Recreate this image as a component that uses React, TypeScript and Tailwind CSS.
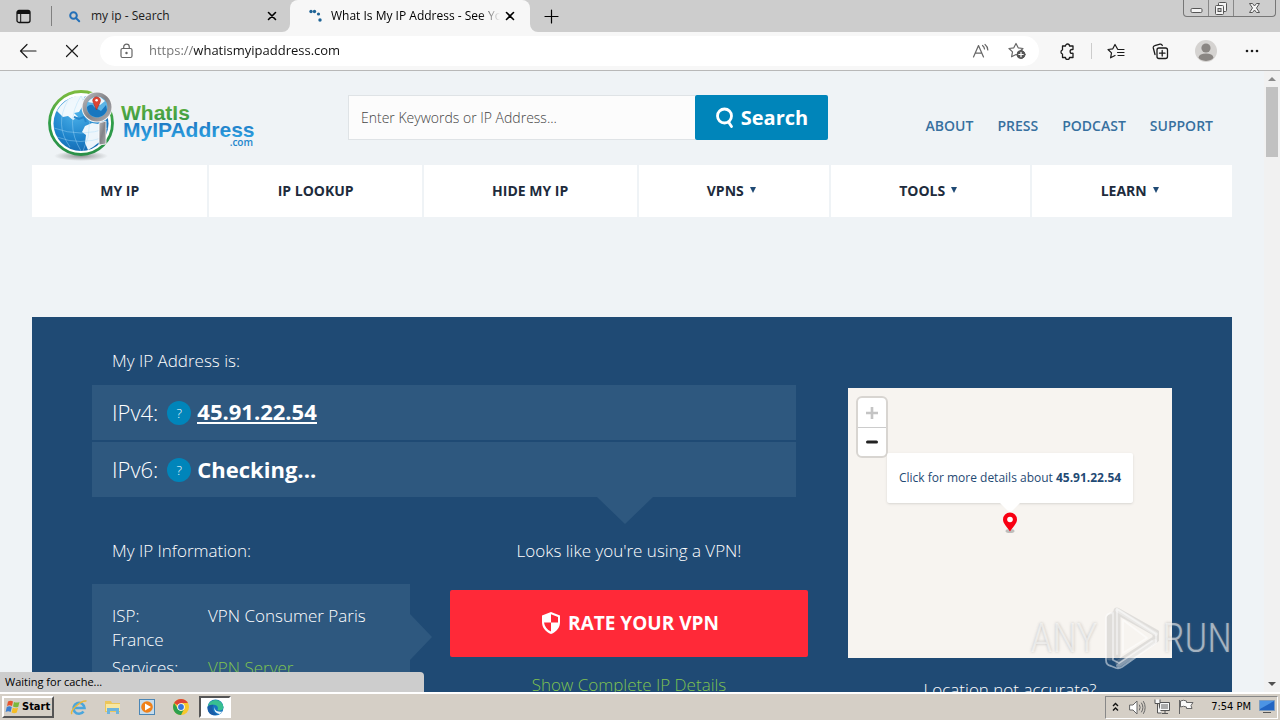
import type { ReactNode } from 'react';

const stroke = { fill: 'none', stroke: 'currentColor', strokeLinecap: 'round' as const, strokeLinejoin: 'round' as const };

function CloseIcon() {
  return (
    <svg className="size-3" viewBox="0 0 12 12" {...stroke} strokeWidth="1.6">
      <path d="M2.5 2.5l7 7M9.5 2.5l-7 7" />
    </svg>
  );
}

function WindowButtons() {
  return (
    <div className="flex h-[17px] self-start overflow-hidden rounded-b-[4px] border border-t-0 border-[#777] text-[#555] mr-1">
      <button aria-label="Minimize" className="flex w-[25px] items-center justify-center border-r border-[#888]">
        <svg width="13" height="16" viewBox="0 0 13 16"><rect x="1" y="8.5" width="11" height="4" rx="1.2" fill="#f4f4f4" stroke="#555" /></svg>
      </button>
      <button aria-label="Restore" className="flex w-[25px] items-center justify-center border-r border-[#888]">
        <svg width="14" height="16" viewBox="0 0 14 16" fill="#f4f4f4" stroke="#555">
          <rect x="4.5" y="2.5" width="8" height="9" rx="1" />
          <rect x="1.500" y="5.5" width="8" height="9" rx="1" />
          <rect x="4" y="8.500" width="3" height="3" fill="#ccc" />
        </svg>
      </button>
      <button aria-label="Close" className="flex w-[41px] items-center justify-center">
        <svg width="13" height="14" viewBox="0 0 13 14"><path d="M1.500 2.500h3l2 2.500 2-2.500h3L8.500 7l3 4.500h-3l-2-2.500-2 2.500h-3l3-4.500z" fill="#f4f4f4" stroke="#555" /></svg>
      </button>
    </div>
  );
}

function TabStrip() {
  return (
    <div className="flex h-8 shrink-0 items-end bg-[#cdcdcd] text-[12px]">
      <button aria-label="Tab actions" className="flex h-8 w-[51px] shrink-0 items-center justify-center pr-1">
        <svg width="15" height="15" viewBox="0 0 15 15">
          <rect x="1" y="1.500" width="13" height="12" rx="2" fill="none" stroke="#111" strokeWidth="1.300" />
          <path d="M1 5V3.500A2 2 0 0 1 3 1.500h9a2 2 0 0 1 2 2V5z" fill="#111" />
          <path d="M4.700 5v8" stroke="#111" />
        </svg>
      </button>
      <div className="mb-[6px] h-5 w-px bg-[#808080]" />
      <div className="flex h-8 w-[238px] items-center pl-4 pr-3">
        <svg className="mr-[10px]" width="13" height="13" viewBox="0 0 13 13" {...stroke} stroke="#2470b8" strokeWidth="2">
          <circle cx="5.500" cy="5.500" r="3.300" /><path d="M8.200 8.200l3 3" />
        </svg>
        <span className="flex-1 text-[#1b1b1b]">my ip - Search</span>
        <button aria-label="Close my ip - Search"><CloseIcon /></button>
      </div>
      <div className="relative flex h-8 w-[240px] items-center rounded-t-lg bg-[#f7f7f7] pl-[17px] pr-[14px]">
        <svg className="absolute -left-2 bottom-0" width="8" height="8" viewBox="0 0 8 8"><path d="M8 0v8H0a8 8 0 0 0 8-8z" fill="#f7f7f7" /></svg>
        <svg className="absolute -right-2 bottom-0" width="8" height="8" viewBox="0 0 8 8"><path d="M0 0v8h8a8 8 0 0 1-8-8z" fill="#f7f7f7" /></svg>
        <svg className="mr-[9px] shrink-0" width="15" height="15" viewBox="0 0 15 15" fill="#1f6496">
          <circle cx="4" cy="2.500" r="1.700" /><circle cx="7.500" cy="2.500" r="1.700" /><circle cx="11.500" cy="5" r="1.600" /><circle cx="13" cy="11" r="1.700" />
        </svg>
        <span className="flex-1 overflow-hidden whitespace-nowrap text-black [mask-image:linear-gradient(90deg,#000_88%,transparent)]">What Is My IP Address - See You</span>
        <button aria-label="Close What Is My IP Address" className="ml-1"><CloseIcon /></button>
      </div>
      <button aria-label="New tab" className="flex size-8 items-center justify-center ml-[5px]">
        <svg width="15" height="15" viewBox="0 0 15 15" {...stroke} strokeWidth="1.200"><path d="M7.500 1v13M1 7.500h13" /></svg>
      </button>
      <div className="flex-1" />
      <WindowButtons />
    </div>
  );
}

function ToolButton({ label, children }: { label: string; children: ReactNode }) {
  return <button aria-label={label} className="flex size-6 shrink-0 items-center justify-center text-[#1b1b1b]">{children}</button>;
}

function Toolbar() {
  return (
    <div className="flex h-[39px] shrink-0 items-center border-b border-[#b8b8b8] bg-[#f7f7f7] pl-4 pr-4">
      <ToolButton label="Back">
        <svg width="18" height="16" viewBox="0 0 18 16" {...stroke} strokeWidth="1.200"><path d="M8 1.500L1.500 8 8 14.500M1.500 8H17" /></svg>
      </ToolButton>
      <div className="w-5" />
      <ToolButton label="Stop">
        <svg width="14" height="14" viewBox="0 0 14 14" {...stroke} strokeWidth="1.200"><path d="M1.500 1.500l11 11M12.500 1.500l-11 11" /></svg>
      </ToolButton>
      <div className="ml-4 flex h-[30px] flex-1 items-center rounded-full bg-white pl-5 pr-[10px]">
        <svg width="13" height="16" viewBox="0 0 13 16" {...stroke} stroke="#666" strokeWidth="1.200">
          <rect x="1" y="5.500" width="11" height="9" rx="1.500" /><path d="M3.700 5.500V4a2.800 2.800 0 0 1 5.600 0v1.500" /><circle cx="6.500" cy="10" r=".6" fill="#666" />
        </svg>
        <input
          aria-label="Address"
          defaultValue="https://whatismyipaddress.com"
          className="ml-4 min-w-0 flex-1 bg-[linear-gradient(90deg,#707070_45px,#111_45px)] bg-clip-text text-[13px] text-transparent outline-none"
        />
        <ToolButton label="Read aloud">
          <svg width="18" height="16" viewBox="0 0 18 16" {...stroke} stroke="#666" strokeWidth="1.200">
            <path d="M1.500 14L6.500 2.500 11.500 14M3.200 10.200h6.600M10.500 2.500c1.200.9 1.900 2 2 3.500M13 1.500c1.700 1.300 2.700 3 2.800 5.500" />
          </svg>
        </ToolButton>
        <div className="w-3" />
        <ToolButton label="Add to favorites">
          <svg width="18" height="18" viewBox="0 0 18 18" {...stroke} stroke="#666" strokeWidth="1.200">
            <path d="M9.500 13.300L8 12.500l-4.400 2.300.9-4.900L1 6.500l4.800-.7L8 1.500l2.200 4.300 4.800.7-2.200 2" />
            <circle cx="13" cy="12.500" r="4" fill="#555" stroke="#555" strokeWidth="1" /><path d="M13 10.300v4.400M10.800 12.500h4.400" stroke="#fff" />
          </svg>
        </ToolButton>
      </div>
      <div className="w-4" />
      <ToolButton label="Extensions">
        <svg width="17" height="17" viewBox="0 0 17 17" {...stroke} strokeWidth="1.300">
          <path d="M3.500 3h3a2 2 0 0 1 4 0H14v3.500a1 1 0 0 1-1 0 1.700 1.700 0 1 0 0 3.800 1 1 0 0 1 1 0V14.500h-3.500a2 2 0 0 1-4 0h-3V11a2.200 2.200 0 0 1 0-4.200z" />
        </svg>
      </ToolButton>
      <div className="mx-3 h-4 w-px bg-[#ccc]" />
      <ToolButton label="Favorites">
        <svg width="18" height="17" viewBox="0 0 18 17" {...stroke} strokeWidth="1.200">
          <path d="M10.500 6L8 1.500 5.800 5.800 1 6.500l3.500 3.400-.9 4.900L8 12.500M11 6.500h6M10.500 9.500H17M11 12.500h6" />
        </svg>
      </ToolButton>
      <div className="w-5" />
      <ToolButton label="Collections">
        <svg width="18" height="18" viewBox="0 0 18 18" {...stroke} strokeWidth="1.300">
          <path d="M4 12.500L2.300 6a2 2 0 0 1 1.500-2.400L9 2.200a2 2 0 0 1 2.300 1.300" /><rect x="6" y="6" width="10.500" height="10.500" rx="2" /><path d="M11.200 8.500v5.500M8.500 11.200H14" />
        </svg>
      </ToolButton>
      <div className="w-[22px]" />
      <ToolButton label="Profile">
        <svg width="22" height="22" viewBox="0 0 22 22"><circle cx="11" cy="11" r="11" fill="#d5d3d1" /><circle cx="11" cy="8" r="4.600" fill="#8a8683" /><ellipse cx="11" cy="17.200" rx="7.300" ry="3.700" fill="#8a8683" /></svg>
      </ToolButton>
      <div className="w-[22px]" />
      <ToolButton label="Settings and more">
        <svg width="14" height="4" viewBox="0 0 14 4" fill="currentColor"><circle cx="2" cy="2" r="1.300" /><circle cx="7" cy="2" r="1.300" /><circle cx="12" cy="2" r="1.300" /></svg>
      </ToolButton>
    </div>
  );
}

function Logo() {
  return (
    <a href="#" aria-label="WhatIsMyIPAddress.com" className="block shrink-0">
      <svg width="208" height="74" viewBox="0 0 208 74">
        <defs>
          <linearGradient id="ring" x1="0" y1="0" x2="0" y2="1"><stop offset="0" stopColor="#7cbb3f" /><stop offset=".5" stopColor="#2f9d4a" /><stop offset="1" stopColor="#2b9048" /></linearGradient>
          <radialGradient id="globe" cx=".4" cy=".3" r=".8"><stop offset="0" stopColor="#4db2ea" /><stop offset=".6" stopColor="#1d83cb" /><stop offset="1" stopColor="#1464ab" /></radialGradient>
          <linearGradient id="green" x1="0" y1="0" x2="0" y2="1"><stop offset="0" stopColor="#6ab53c" /><stop offset="1" stopColor="#2f9548" /></linearGradient>
          <linearGradient id="blue" x1="0" y1="0" x2="0" y2="1"><stop offset="0" stopColor="#1a6dbb" /><stop offset="1" stopColor="#2fa8e6" /></linearGradient>
          <linearGradient id="steel" x1="0" y1="0" x2="1" y2="1"><stop offset="0" stopColor="#b5b5b8" /><stop offset=".5" stopColor="#838388" /><stop offset="1" stopColor="#a9a9ad" /></linearGradient>
          <radialGradient id="shade"><stop offset="0" stopColor="#555" stopOpacity=".6" /><stop offset="1" stopColor="#555" stopOpacity="0" /></radialGradient>
        </defs>
        <ellipse cx="33" cy="68" rx="27" ry="5" fill="url(#shade)" />
        <circle cx="33" cy="35" r="31.500" fill="#fff" stroke="url(#ring)" strokeWidth="2.800" />
        <circle cx="33" cy="35.500" r="27.500" fill="url(#globe)" />
        <path d="M9 23c4-7 11-13 19-15l9 0-2 5 4 2-5 4-3 5-5 1 4 4-5 3-5-4-5 1-3-3z" fill="#fff" opacity=".92" />
        <path d="M37 38l7-3 13 2 1 6-4 9-9 7-5 3-3-7 1-8-4-3z" fill="#fff" opacity=".92" />
        <path d="M6 40q27 10 54 0M9 49q23 9 48 0M33 8q-17 27 0 55M20 12q-14 25 2 47M33 8q16 27 2 55" fill="none" stroke="#a8dcf8" strokeWidth=".6" opacity=".7" />
        <path d="M26 29l5 2 5-2 2 5" fill="none" stroke="#2586cb" strokeWidth="2" />
        <path d="M51 35l7-2v23l-7 1z" fill="url(#steel)" stroke="#fff" strokeWidth=".8" />
        <circle cx="49" cy="19" r="15.500" fill="#f4f5f6" />
        <circle cx="49" cy="19" r="12.500" fill="#5bb4e6" stroke="url(#steel)" strokeWidth="4" />
        <path d="M39 19c3-3 6-3 7 0l7 4 5-6 1 5c-2 6-8 8-12 7-5-1-8-5-8-10z" fill="#1877bf" />
        <path d="M40 14c3-4 7-6 12-5l5 4-5 4-7-2z" fill="#eef7fc" />
        <path d="M48.500 22l-3.300-7.500a3.900 3.900 0 1 1 6.800 0z" fill="#dd4534" stroke="#9d281e" strokeWidth=".5" /><circle cx="48.600" cy="12.300" r="1.300" fill="#fff" />
        <g fontFamily="Liberation Sans, Arial, sans-serif" fontWeight="700" fontSize="21">
          <text x="73" y="32" fill="url(#green)">WhatIs</text>
          <text x="75" y="49" fill="url(#blue)">MyIPAddress</text>
        </g>
        <text x="205" y="58" textAnchor="end" fontFamily="Open Sans, sans-serif" fontSize="10" fontWeight="600" fill="#2386cc">.com</text>
      </svg>
    </a>
  );
}

function SiteHeader() {
  return (
    <header className="flex h-[94px] items-start px-4">
      <div className="w-[300px] shrink-0 pt-[17px]"><Logo /></div>
      <form className="mt-6 flex h-[45px] w-[480px] shrink-0" onSubmit={(e) => e.preventDefault()}>
        <input
          aria-label="Enter Keywords or IP Address"
          placeholder="Enter Keywords or IP Address..."
          className="min-w-0 flex-1 border border-r-0 border-[#dfe3e6] bg-[#fcfcfc] px-3 text-[14px] font-light text-[#333] outline-none placeholder:text-[#444]"
        />
        <button className="flex w-[133px] items-center justify-center gap-[6px] rounded-[2px] bg-[#0085ba] text-[20px] font-bold text-white">
          <svg width="20" height="22" viewBox="0 0 20 22" {...stroke} strokeWidth="2.800"><circle cx="9.500" cy="9" r="7" /><path d="M13.500 15l3 4.500" /></svg>
          Search
        </button>
      </form>
      <nav className="ml-auto mt-[45px] flex gap-6 pr-[3px] text-[14px] leading-5 font-semibold text-[#37709f]">
        {['ABOUT', 'PRESS', 'PODCAST', 'SUPPORT'].map((t) => <a key={t} href="#">{t}</a>)}
      </nav>
    </header>
  );
}

const menu = [
  { label: 'MY IP' }, { label: 'IP LOOKUP' }, { label: 'HIDE MY IP' },
  { label: 'VPNS', drop: true }, { label: 'TOOLS', drop: true }, { label: 'LEARN', drop: true },
];

function MainNav() {
  return (
    <nav className="flex h-[52px] gap-[2px] text-[14px] font-bold text-[#202b3c]">
      {menu.map((m) => (
        <a key={m.label} href="#" className={`flex flex-auto items-center justify-center gap-[6px] whitespace-nowrap bg-white pb-[2px] ${m.drop ? 'pr-[5px]' : ''}`}>
          {m.label}
          {m.drop && <svg width="6" height="6" viewBox="0 0 6 6"><path d="M0 0h6L3 6z" fill="#1f4a74" /></svg>}
        </a>
      ))}
    </nav>
  );
}

function AddressRow({ label, children }: { label: string; children: ReactNode }) {
  return (
    <div className="flex h-[55px] items-center bg-[#2e587f] px-5 pb-[2px] text-[22px]">
      <span className="font-light">{label}</span>
      <button aria-label={`About ${label}`} className="ml-[9px] mr-[6px] mt-[2px] size-6 rounded-full bg-[#0085ba] text-[13px] font-light">?</button>
      {children}
    </div>
  );
}

function MapCard() {
  return (
    <div className="relative h-[270px] bg-[#f7f4f0]">
      <div className="absolute left-2 top-2 flex w-8 flex-col rounded-md border-2 border-[#d8d5d1] bg-white">
        <button aria-label="Zoom in" className="flex h-[30px] items-center justify-center border-b border-[#ccc]">
          <svg width="12" height="12" viewBox="0 0 12 12"><path d="M6 0v12M0 6h12" stroke="#c4c4c4" strokeWidth="2.600" /></svg>
        </button>
        <button aria-label="Zoom out" className="flex h-7 items-center justify-center">
          <svg width="12" height="12" viewBox="0 0 12 12" {...stroke} stroke="#222" strokeWidth="3"><path d="M1.500 6h9" /></svg>
        </button>
      </div>
      <a href="#" className="absolute left-[39px] top-[65px] flex h-[50px] w-[246px] items-center justify-center whitespace-nowrap rounded-[2px] bg-white text-[12px] font-normal text-[#1f4a74] shadow-sm">
        <span>Click for more details about <b className="font-bold">45.91.22.54</b></span>
      </a>
      <svg className="absolute left-[152px] top-[115px]" width="20" height="10" viewBox="0 0 20 10"><path d="M0 0h20L10 10z" fill="#fff" /></svg>
      <svg className="absolute left-[154px] top-[124px]" width="16" height="22" viewBox="0 0 16 22">
        <ellipse cx="8" cy="19" rx="4.500" ry="2" fill="#999" opacity=".6" />
        <path d="M8 19.500C5 15 1 11.500 1 7.500a7 7 0 1 1 14 0c0 4-4 7.500-7 12z" fill="#f80012" /><circle cx="8" cy="7.500" r="2.800" fill="#fff" />
      </svg>
    </div>
  );
}

function Hero() {
  return (
    <section className="mt-[100px] flex gap-10 bg-[#1f4a74] px-[60px] text-[17px] leading-6 text-white">
      <div className="flex-1 pt-8">
        <h2 className="px-5 font-light">My IP Address is:</h2>
        <div className="relative mr-3 mt-3 flex flex-col gap-[2px]">
          <AddressRow label="IPv4:"><a href="#" className="border-b-2 border-white font-bold leading-[22px]">45.91.22.54</a></AddressRow>
          <AddressRow label="IPv6:"><span className="font-bold">Checking...</span></AddressRow>
          <svg className="absolute left-[505px] top-full" width="56" height="27" viewBox="0 0 56 27"><path d="M0 0h56L28 27z" fill="#2e587f" /></svg>
        </div>
        <div className="mt-[42px] flex gap-10">
          <div className="w-[318px] shrink-0 font-light">
            <h2 className="px-5">My IP Information:</h2>
            <div className="relative mt-[21px] h-[240px] bg-[#2e587f] px-5 pt-5">
              <ul className="flex flex-col gap-1">
                <li><span className="inline-block w-24">ISP:</span>VPN Consumer Paris France</li>
                <li><span className="inline-block w-24">Services:</span><a href="#" className="text-[#7fc351]">VPN Server</a></li>
              </ul>
              <svg className="absolute left-full top-[30px]" width="22" height="46" viewBox="0 0 22 46"><path d="M0 0v46L22 23z" fill="#2e587f" /></svg>
            </div>
          </div>
          <div className="flex flex-1 flex-col text-center">
            <p className="font-light">Looks like you're using a VPN!</p>
            <button className="mt-[27px] flex h-[67px] items-center justify-center gap-2 rounded-[2px] bg-[#ff2938] pb-[2px] pl-[3px] text-[19px] font-bold">
              <svg width="18" height="22" viewBox="0 0 18 22"><path d="M9 0l9 3.500v6.500c0 5.500-3.500 10-9 12-5.500-2-9-6.500-9-12V3.500z" fill="#fff" /><path d="M9 2.300l7 2.700v5.500H9zM9 10.500v9c-4-1.800-6.500-5-7-9z" fill="#ff2938" /></svg>
              RATE YOUR VPN
            </button>
            <a href="#" className="mt-4 font-light text-[#7fc351]">Show Complete IP Details</a>
          </div>
        </div>
      </div>
      <div className="w-[324px] shrink-0 pt-[71px] text-center font-light">
        <MapCard />
        <a href="#" className="mt-5 block">Location not accurate?</a>
      </div>
    </section>
  );
}

function Scrollbar() {
  return (
    <div className="flex w-4 shrink-0 flex-col items-center bg-[#f1f1f1] py-[6px]">
      <svg width="8" height="4" viewBox="0 0 8 4"><path d="M0 4l4-4 4 4z" fill="#8a8a8a" /></svg>
      <div className="mt-[6px] h-[70px] w-3 bg-[#c1c1c1]" />
      <svg className="mt-auto" width="8" height="4" viewBox="0 0 8 4"><path d="M0 0l4 4 4-4z" fill="#505050" /></svg>
    </div>
  );
}

function Watermark() {
  return (
    <div className="pointer-events-none absolute bottom-5 right-12 flex items-center gap-1 text-[40px] leading-none font-light text-white/55 [font-family:'Roboto_Condensed','Liberation_Sans_Narrow','Liberation_Sans',sans-serif] [text-shadow:0_0_3px_rgba(120,120,120,0.45)]">
      <span>ANY</span>
      <svg width="57" height="66" viewBox="0 0 57 66" fill="none" strokeLinejoin="round" strokeLinecap="round">
        <path d="M8 51V12l4-3M15 49V5l39 22v6L17 57" stroke="#aaa" strokeOpacity=".3" strokeWidth="7" />
        <path d="M4 11v43q0 5 5 6l5 2q3 1 6-1l34-24v-9L15 3v45M4 11q1-4 7-4v47l6 3 33-22M21 14v33l24-15z" stroke="#fff" strokeOpacity=".5" strokeWidth="1.800" />
        <path d="M15 4l39 24M16 60l37-25" stroke="#fff" strokeOpacity=".35" strokeWidth="4" />
      </svg>
      <span>RUN</span>
    </div>
  );
}

function EdgeIcon() {
  return (
    <svg width="17" height="17" viewBox="0 0 17 17">
      <circle cx="8.500" cy="8.500" r="8" fill="#1675bf" />
      <path d="M.6 8A8 8 0 0 1 16.500 8c0 3-3 4.500-6 3 1-2 .3-5-3.500-5.300C4 5.500 1.500 6.500.6 8z" fill="#38bf91" />
      <path d="M.6 8c1-2 3.500-2.600 6-2C4.500 8 5 13 10 15.500 4 18 0 13 .6 8z" fill="#1a5da8" />
      <path d="M8 8c-1 3 2 5.500 7.500 4.500L13 15C9 15 6 11 8 8z" fill="#eef8ff" />
    </svg>
  );
}

function Taskbar() {
  return (
    <footer className="flex h-7 shrink-0 items-center border-t-2 border-white bg-[#d5cfc6] pl-[2px] text-[11px] text-black [font-family:'DejaVu_Sans_Condensed','DejaVu_Sans',sans-serif]">
      <button className="flex h-[22px] w-[52px] items-center gap-[2px] border-2 border-b-[#555] border-l-white border-r-[#555] border-t-white pl-[1px] font-bold">
        <svg className="shrink-0" width="15" height="14" viewBox="0 0 15 14">
          <path d="M3 1.500q3-1.500 5 0L7 6Q4.500 4.700 2 6z" fill="#e8542c" /><path d="M9 2q2.500 1.200 5.500 0L13.300 6.700Q10.500 8 8 6.500z" fill="#7ab83c" />
          <path d="M1.800 7q2.500-1.300 5 0l-1.200 5q-2.300-1.500-5 0z" fill="#3c7fd0" /><path d="M7.800 7.700q2.700 1.300 5.300 0l-1.300 4.800q-2.500 1.400-5.200 0z" fill="#f5bd25" />
        </svg>
        <span>Start</span>
      </button>
      <div className="ml-2 flex items-center">
        <button aria-label="Internet Explorer" className="flex w-[34px] justify-center">
          <svg width="18" height="17" viewBox="0 0 18 17" fill="none"><path d="M5 9h9.500A5.500 5.500 0 1 0 13.500 12.500" stroke="#4ba6dc" strokeWidth="2.600" /><path d="M2 15C-1 12 11 1 16.500 2" stroke="#e9b83a" strokeWidth="1.500" /></svg>
        </button>
        <button aria-label="File Explorer" className="flex w-[34px] justify-center">
          <svg width="18" height="16" viewBox="0 0 18 16"><path d="M1 2h6l1 2h8v9H1z" fill="#ecc65b" /><path d="M2 5h14v7H2z" fill="#f8e7a0" /><path d="M3 9h12v6h-3v-3H6v3H3z" fill="#6eb4dc" /></svg>
        </button>
        <button aria-label="Media Player" className="flex w-[34px] justify-center">
          <svg width="16" height="16" viewBox="0 0 16 16"><rect x=".5" y=".5" width="15" height="15" fill="#c6dcec" stroke="#4b86b5" /><circle cx="8" cy="8" r="5.800" fill="#f08119" /><path d="M6 4.500l6 3.500-6 3.500z" fill="#fff" /></svg>
        </button>
        <button aria-label="Chrome" className="flex w-[34px] justify-center">
          <svg width="16" height="16" viewBox="0 0 16 16"><circle cx="8" cy="8" r="8" fill="#f7c82c" /><path d="M8 8L1.100 4A8 8 0 0 1 14.900 4H8z" fill="#dd4537" /><path d="M8 16A8 8 0 0 1 1.100 4l4 6L8 12l3-2z" fill="#2da04e" /><circle cx="8" cy="8" r="3.800" fill="#fff" /><circle cx="8" cy="8" r="2.900" fill="#3577dc" /></svg>
        </button>
        <button aria-label="Edge" className="ml-[1px] flex h-[22px] w-8 items-center justify-center border-2 border-b-white border-l-[#555] border-r-white border-t-[#555] bg-white"><EdgeIcon /></button>
      </div>
      <div className="ml-auto mr-[2px] flex h-[23px] items-center border border-b-white border-l-[#888] border-r-white border-t-[#888] pl-[6px]">
        <svg width="7" height="10" viewBox="0 0 7 10" fill="none" stroke="#111" strokeWidth="1.400"><path d="M1 4l2.500-2.500L6 4M1 8.500L3.500 6 6 8.500" /></svg>
        <svg className="ml-[10px]" width="17" height="15" viewBox="0 0 17 15" {...stroke} stroke="#666"><path d="M1 5h3l4-4v13l-4-4H1z" fill="#fff" /><path d="M10.500 5q1.500 2.500 0 5M12.500 3q3 4.500 0 9M14.500 1.500q3.500 6 0 12" /></svg>
        <svg className="ml-2" width="16" height="16" viewBox="0 0 16 16" fill="#f8f8f8" stroke="#555"><path d="M5.500 3.500h10v8h-10zM8 14.500h6M11 11.500v3" /><path d="M7 5h7v5H7z" fill="#aaa" stroke="none" /><path d="M1 .5v4h5v-4M3.500 4.500V14h4" /></svg>
        <svg className="ml-2" width="17" height="16" viewBox="0 0 17 16" fill="#fafafa" stroke="#666"><path d="M2.500 2q3-1.500 6 0v1.500h6.500l-2 3 1 3H8.500V8q-3-1.500-6 0z" /><path d="M1.500 1v14" /></svg>
        <span className="ml-4 whitespace-nowrap">7:54 PM</span>
        <svg className="ml-2 mr-[2px]" width="16" height="14" viewBox="0 0 16 14"><path d="M.5.5h15v10H.5z" fill="#2265c3" stroke="#7c9cc0" /><path d="M1 1h14L1 9z" fill="#4c94e4" /><path d="M4 12.500h8" stroke="#555" /></svg>
      </div>
    </footer>
  );
}

export default function App() {
  return (
    <div className="flex h-screen flex-col overflow-hidden [font-family:'Open_Sans','Noto_Sans',sans-serif]">
      <TabStrip />
      <Toolbar />
      <div className="relative flex min-h-0 flex-1">
        <main className="min-w-0 flex-1 overflow-hidden bg-[#eff3f6] px-8">
          <SiteHeader />
          <MainNav />
          <Hero />
        </main>
        <Scrollbar />
        <Watermark />
        <div className="absolute bottom-0 left-0 h-5 w-[424px] rounded-tr-[4px] bg-[#cdcdcd] pl-[5px] text-[11px] leading-5 text-black">Waiting for cache...</div>
      </div>
      <Taskbar />
    </div>
  );
}
